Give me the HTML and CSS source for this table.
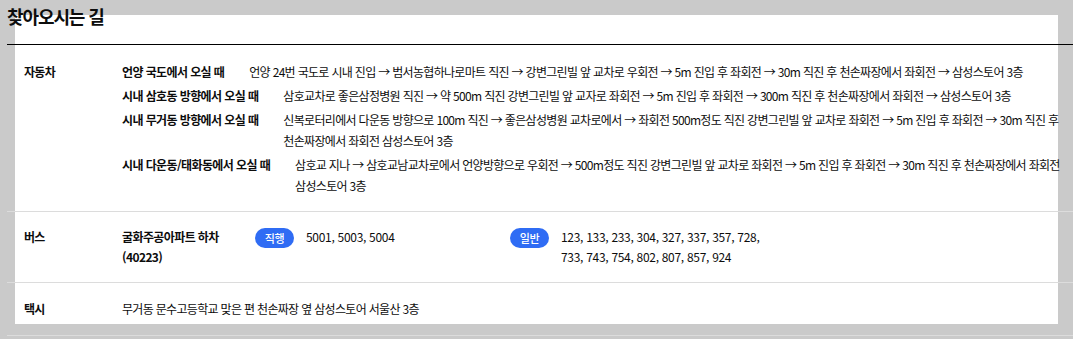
FILE: index.html
```html
<!DOCTYPE html>
<html lang="ko">
<head>
<meta charset="utf-8">
<title>찾아오시는 길</title>
<link rel="stylesheet" href="styles.css">
</head>
<body>
<div class="sheet"></div>
<main class="page">
  <h2 class="title">찾아오시는 길</h2>
  <div class="guide">
    <section class="row">
      <h3 class="row-label">자동차</h3>
      <dl class="routes">
        <div class="route">
          <dt>언양 국도에서 오실 때</dt>
          <dd>언양 24번 국도로 시내 진입 → 범서농협하나로마트 직진 → 강변그린빌 앞 교차로 우회전 → 5m 진입 후 좌회전 → 30m 직진 후 천손짜장에서 좌회전 → 삼성스토어 3층</dd>
        </div>
        <div class="route">
          <dt>시내 삼호동 방향에서 오실 때</dt>
          <dd>삼호교차로 좋은삼정병원 직진 → 약 500m 직진 강변그린빌 앞 교자로 좌회전 → 5m 진입 후 좌회전 → 300m 직진 후 천손짜장에서 좌회전 → 삼성스토어 3층</dd>
        </div>
        <div class="route">
          <dt>시내 무거동 방향에서 오실 때</dt>
          <dd>신복로터리에서 다운동 방향으로 100m 직진 → 좋은삼성병원 교차로에서 → 좌회전 500m정도 직진 강변그린빌 앞 교차로 좌회전 → 5m 진입 후 좌회전 → 30m 직진 후 천손짜장에서 좌회전 삼성스토어 3층</dd>
        </div>
        <div class="route">
          <dt>시내 다운동/태화동에서 오실 때</dt>
          <dd>삼호교 지나 → 삼호교남교차로에서 언양방향으로 우회전 → 500m정도 직진 강변그린빌 앞 교차로 좌회전 → 5m 진입 후 좌회전 → 30m 직진 후 천손짜장에서 좌회전 삼성스토어 3층</dd>
        </div>
      </dl>
    </section>
    <section class="row row-bus">
      <h3 class="row-label">버스</h3>
      <div class="bus">
        <p class="stop">굴화주공아파트 하차 (40223)</p>
        <div class="bus-line">
          <span class="badge">직행</span>
          <p class="nums">5001, 5003, 5004</p>
        </div>
        <div class="bus-line">
          <span class="badge">일반</span>
          <p class="nums">123, 133, 233, 304, 327, 337, 357, 728, 733, 743, 754, 802, 807, 857, 924</p>
        </div>
      </div>
    </section>
    <section class="row row-taxi">
      <h3 class="row-label">택시</h3>
      <p class="taxi">무거동 문수고등학교 맞은 편 천손짜장 옆 삼성스토어 서울산 3층</p>
    </section>
  </div>
</main>
</body>
</html>
```

FILE: styles.css
```css
html {
  background: #cacaca;
}
body {
  margin: 0;
  font-family: "Noto Sans CJK KR", "Noto Sans", sans-serif;
  color: #0d0d0d;
  font-size: 12px;
  letter-spacing: -0.68px;
  word-break: keep-all;
}
.sheet {
  position: absolute;
  left: 15px;
  top: 15px;
  width: 1043px;
  height: 309px;
  background: #fff;
}
.page {
  position: relative;
  padding: 3px 0 0 7px;
}
.title {
  margin: 0 0 15px;
  font-size: 18px;
  line-height: 26px;
  font-weight: 700;
  letter-spacing: -1.1px;
}
.guide {
  border-top: 1px solid #000;
}
.row {
  display: flex;
  padding: 16px 5px 15px 17px;
  border-bottom: 1px solid #dcdcdc;
}
.row-label {
  flex: 0 0 98px;
  margin: 0;
  font-size: 12px;
  font-weight: 700;
  line-height: 21px;
}
.routes {
  flex: 1;
  margin: 0;
  display: flex;
  flex-direction: column;
  gap: 3px;
}
.route {
  display: flex;
  gap: 25px;
  line-height: 21px;
}
.route dt {
  font-weight: 700;
  letter-spacing: -0.6px;
  white-space: nowrap;
}
.route dd {
  flex: 1;
  margin: 0;
}
.row-bus {
  padding-top: 15px;
}
.row-bus .row-label {
  line-height: 20px;
}
.bus {
  display: flex;
  align-items: flex-start;
  line-height: 20px;
}
.stop {
  width: 110px;
  margin: 0 23px 0 0;
  font-weight: 700;
  letter-spacing: -0.6px;
}
.bus-line {
  width: 255px;
  display: flex;
  align-items: flex-start;
  gap: 12px;
}
.badge {
  flex: 0 0 39px;
  height: 20px;
  margin-top: 1px;
  border-radius: 10px;
  background: #2f6cf4;
  color: #fff;
  font-size: 11px;
  font-weight: 500;
  text-align: center;
  letter-spacing: -0.3px;
}
.nums {
  flex: 1;
  margin: 0;
  letter-spacing: -0.3px;
}
.row-taxi {
  padding-top: 15px;
  padding-bottom: 16px;
}
.taxi {
  margin: 0;
  line-height: 21px;
}
```
